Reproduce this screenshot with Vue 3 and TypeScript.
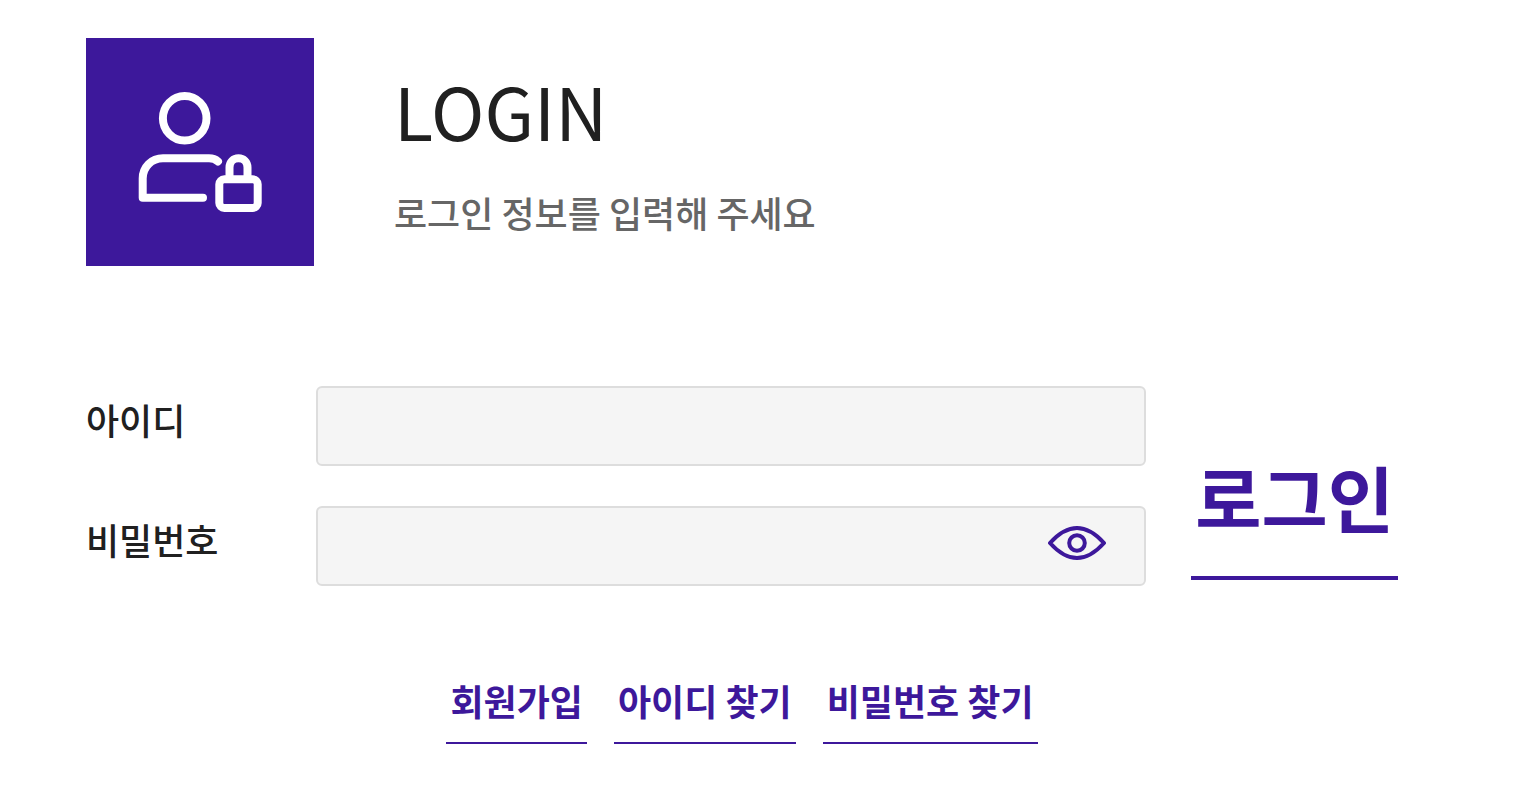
<script setup lang="ts">
import { ref } from 'vue'

interface HelpLink {
  label: string
  href: string
}

const userId = ref('')
const password = ref('')
const showPassword = ref(false)

const links: HelpLink[] = [
  { label: '회원가입', href: '#join' },
  { label: '아이디 찾기', href: '#find-id' },
  { label: '비밀번호 찾기', href: '#find-password' },
]
</script>

<template>
  <main class="login">
    <header class="intro">
      <div class="badge">
        <svg viewBox="0 0 228 228" fill="none" stroke="#fff" stroke-width="8" stroke-linecap="round" stroke-linejoin="round" aria-hidden="true">
          <ellipse cx="98.7" cy="80.3" rx="21.8" ry="22.3" />
          <path d="M132 123.4C129.5 121.2 126.5 120.3 123 120.3H77C65.5 120.3 56.7 129 56.7 140.5V159.7H117" />
          <rect x="133.3" y="141.3" width="38.4" height="28.6" rx="5" />
          <path d="M143.5 141V129.5C143.5 124 147.5 120.3 152.5 120.3S161.5 124 161.5 129.5V141" />
        </svg>
      </div>
      <div class="heading">
        <h1>LOGIN</h1>
        <p>로그인 정보를 입력해 주세요</p>
      </div>
    </header>

    <form class="form" @submit.prevent>
      <div class="fields">
        <div class="row">
          <label for="user-id">아이디</label>
          <div class="control">
            <input id="user-id" v-model="userId" type="text" autocomplete="username" />
          </div>
        </div>
        <div class="row">
          <label for="user-password">비밀번호</label>
          <div class="control">
            <input id="user-password" v-model="password" :type="showPassword ? 'text' : 'password'" autocomplete="current-password" />
            <button class="reveal" type="button" aria-label="비밀번호 표시" :aria-pressed="showPassword" @click="showPassword = !showPassword">
              <svg viewBox="0 0 58 34" fill="none" stroke="#3d189b" stroke-width="4" stroke-linejoin="round" aria-hidden="true">
                <path d="M2 17C11 7 20 2 29 2S47 7 56 17C47 27 38 32 29 32S11 27 2 17Z" />
                <circle cx="29" cy="17" r="7.8" />
              </svg>
            </button>
          </div>
        </div>
      </div>
      <button class="submit" type="submit">로그인</button>
    </form>

    <nav class="links">
      <a v-for="link in links" :key="link.href" :href="link.href">{{ link.label }}</a>
    </nav>
  </main>
</template>

<style>
body {
  margin: 0;
  background: #fff;
}
</style>

<style scoped>
.login {
  box-sizing: border-box;
  padding: 38px 130px 56px 86px;
  color: #202020;
  font-family: "Noto Sans CJK KR", "Noto Sans", sans-serif;
  font-size: 36px;
  line-height: 52px;
}

.intro {
  display: flex;
  align-items: flex-start;
  gap: 80px;
}

.badge {
  flex: none;
  width: 228px;
  height: 228px;
  background: #3d189b;
}

.badge svg {
  display: block;
}

.heading {
  padding-top: 18px;
}

h1 {
  margin: 0;
  font-size: 72px;
  font-weight: 400;
  line-height: 108px;
}

p {
  margin: 22px 0 0;
  color: #666;
  font-weight: 500;
}

.form {
  display: flex;
  align-items: flex-end;
  gap: 45px;
  margin-top: 120px;
}

.fields {
  display: grid;
  flex: 1;
  gap: 40px;
}

.row {
  display: grid;
  grid-template-columns: 230px 1fr;
}

label {
  padding-top: 7px;
  font-weight: 500;
}

.control {
  position: relative;
}

input {
  display: block;
  box-sizing: border-box;
  width: 100%;
  height: 80px;
  padding: 0 24px;
  border: 2px solid #ddd;
  border-radius: 6px;
  background: #f5f5f5;
  color: inherit;
  font: inherit;
}

#user-password {
  padding-right: 110px;
}

.reveal {
  position: absolute;
  top: 20px;
  right: 40px;
  width: 58px;
  height: 34px;
  padding: 0;
  border: 0;
  background: none;
  cursor: pointer;
}

.reveal svg {
  display: block;
}

.submit {
  flex: none;
  margin-bottom: 6px;
  padding: 0 4px 28px;
  border: 0;
  border-bottom: 4px solid #3d189b;
  background: none;
  color: #3d189b;
  font: inherit;
  font-size: 72px;
  font-weight: 700;
  line-height: 104px;
  cursor: pointer;
}

.links {
  display: flex;
  flex-wrap: wrap;
  justify-content: center;
  gap: 27px;
  margin-top: 88px;
}

.links a {
  padding: 0 4px 16px;
  border-bottom: 2px solid #3d189b;
  color: #3d189b;
  font-weight: 700;
  text-decoration: none;
}
</style>
